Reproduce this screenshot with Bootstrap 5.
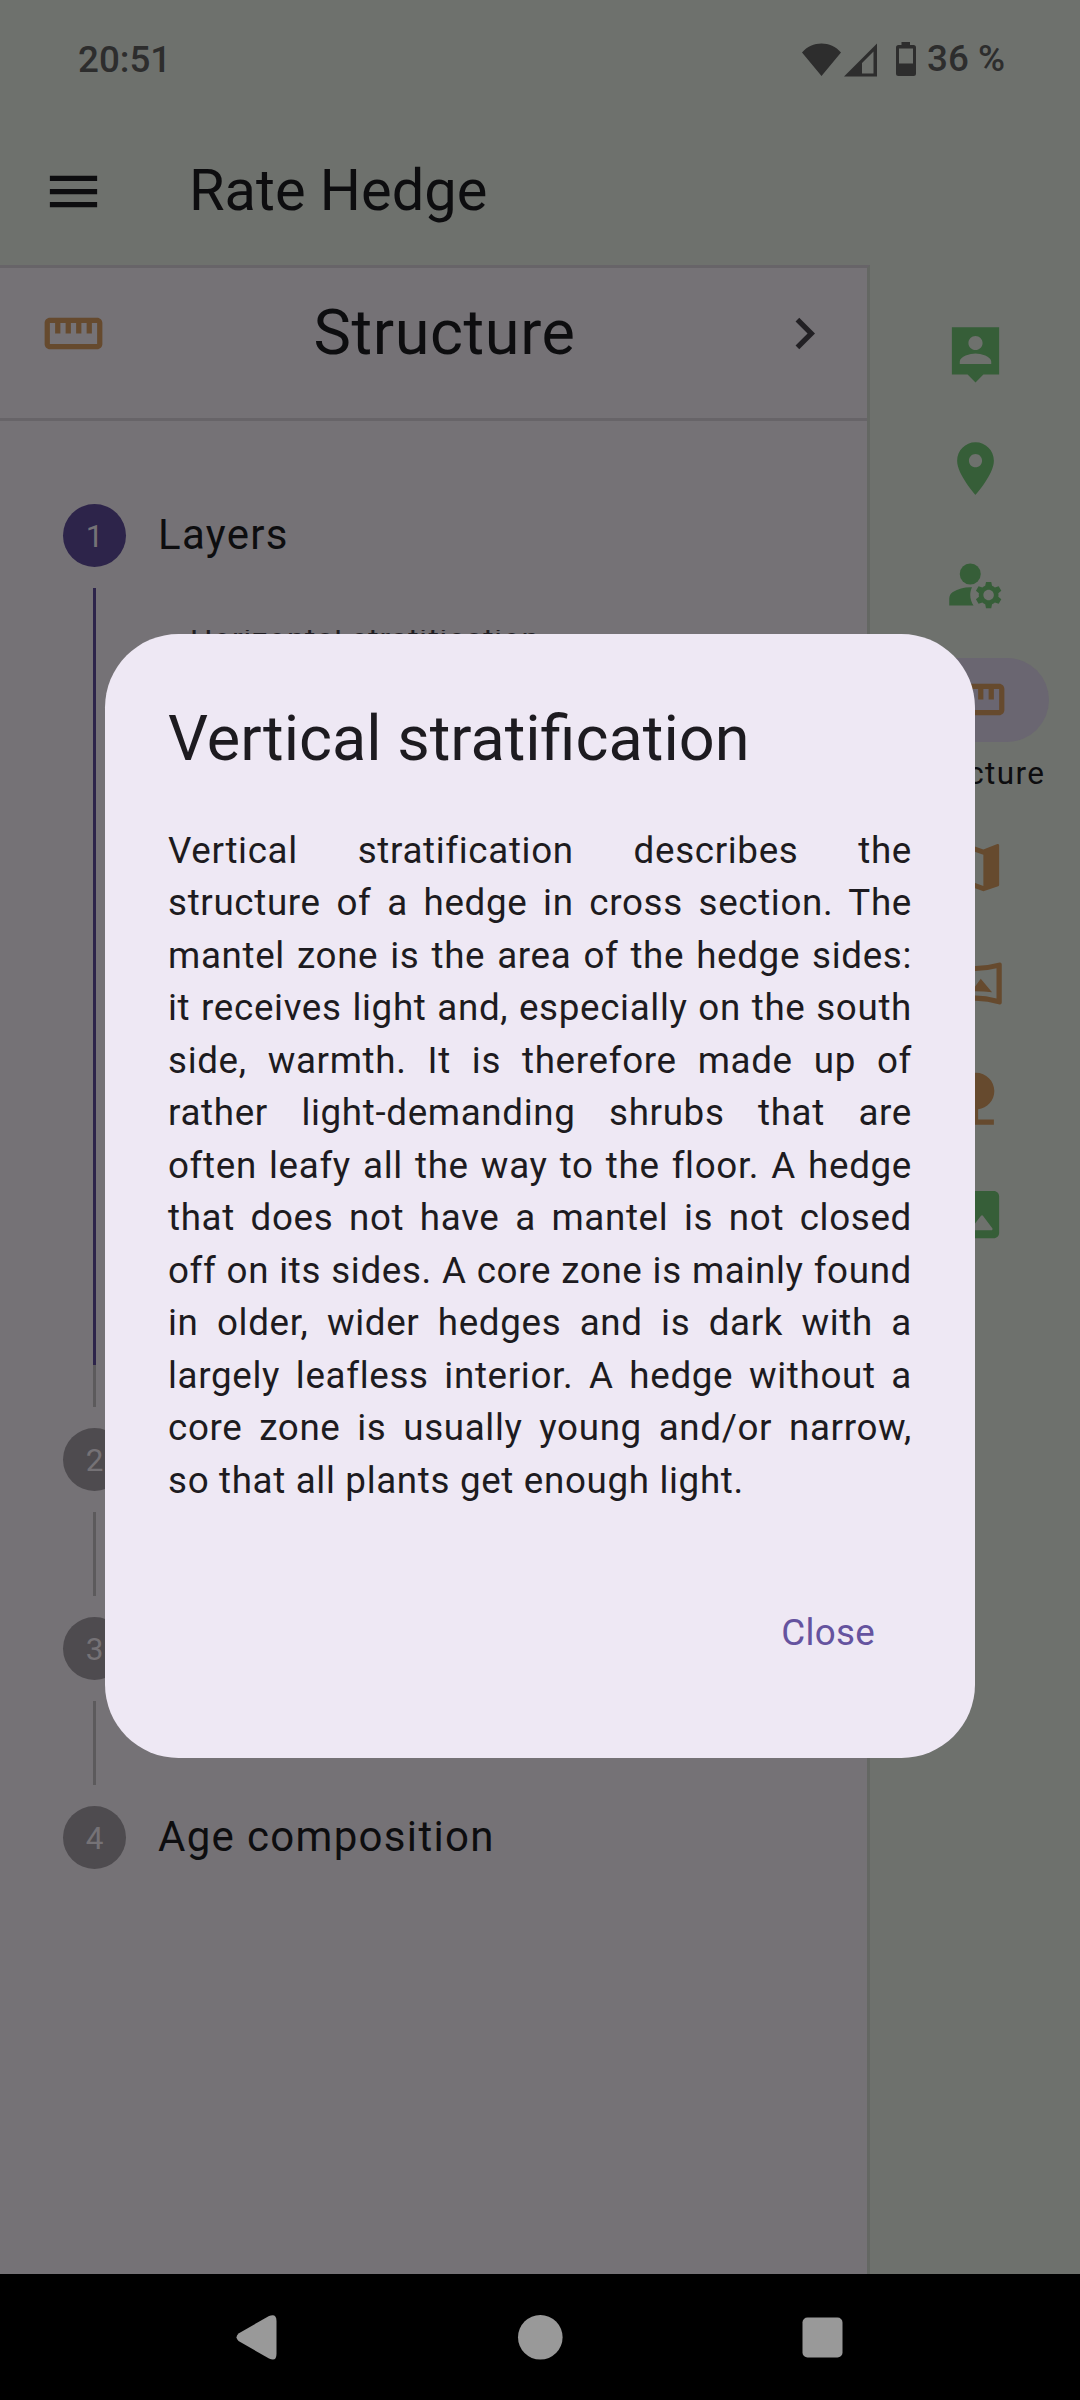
<!DOCTYPE html>
<html lang="en">
<head>
<meta charset="utf-8">
<meta name="viewport" content="width=device-width, initial-scale=1">
<title>Rate Hedge</title>
<link href="https://cdn.jsdelivr.net/npm/bootstrap@5.3.0/dist/css/bootstrap.min.css" rel="stylesheet">
<style>
:root{--shell:#6e716d;--panel:#757276;--rule:#676468;--ink:#0d0d0f;--leaf:#365e38;--bark:#664a2e;--violet:#2d244a}
body{font-family:Roboto,"Noto Sans",sans-serif;background:var(--shell);color:var(--ink);width:1080px;height:2400px;overflow:hidden;line-height:1}
svg{display:block;flex:none;fill:currentColor}
.ico{width:63px;height:63px}
.statusbar{height:118px;padding:0 75px 0 78px;color:#2d2d2d;font-size:36.75px;font-weight:500}
.clock{padding-top:2px}
.charge{margin-left:11px}
.appbar{height:147px;padding-left:42px;font-size:57.75px}
.apptitle{margin-left:84px;padding-bottom:2px}
.work{width:870px;border-top:3px solid var(--rule);border-right:3px solid #646763;background:var(--panel)}
.pagehead{height:153px;padding:0 31px 19px 42px;border-bottom:3px solid var(--rule);font-size:63px}
.pagetitle{letter-spacing:.62px;padding:0 0 2px 11px}
.steps{padding:83px 0 0 63px}
.bullet{width:63px;height:63px;background:#4e4b4f;color:#757276;font-size:31.5px;padding-top:2px}
.bullet.on{background:var(--violet)}
.steplabel{font-size:42px;letter-spacing:1.32px;padding:0 0 2px 32px}
.stem{width:3px;margin:21px 0 21px 30px;background:#5c5a5c;height:84px}
.stem.long{height:819px;background:linear-gradient(var(--violet) 777px,#5c5a5c 777px)}
.stepbody{margin:63px 0 0 94px;overflow:hidden;font-size:31.5px;letter-spacing:.8px;color:#222024}
.scrolled{margin-top:-6.5px;line-height:32px}
.rail{padding-top:57px;color:var(--leaf);width:210px}
.railitem{height:63px;margin-bottom:52.4px}
.earth{color:var(--bark)}
.pill{width:147px;height:84px;border-radius:42px;background:#6a6671}
.raillabel{font-size:31.5px;letter-spacing:1.4px;color:var(--ink)}
.sel{margin-top:-10.5px;height:178.8px}
.navkeys{height:126px;background:#000;color:#999}
.hedge-dialog{position:absolute;inset:634.2px 105px 642.3px 105px;background:#eee8f4;border-radius:73.5px;color:#1d1b20;padding:63px}
.dlgtitle{font-size:63px;line-height:84px;margin:0;font-weight:400}
.dlgtext{font-size:36.75px;line-height:52.5px;letter-spacing:.66px;text-align:justify;margin:43.5px 0 0}
.dlgclose{font-size:36.75px;letter-spacing:.3px;color:#65539f;padding:0;line-height:52px;border:0;margin:100px 37px 0 0}
</style>
</head>
<body class="d-flex flex-column position-relative">
<div class="statusbar d-flex align-items-center justify-content-between">
  <span class="clock">20:51</span>
  <span class="d-flex align-items-center">
    <svg width="114" height="36" viewBox="0 0 114 36"><path d="M0 11.500C10-.5 29-.5 39 11.500L19.500 35zM42 35.500L75 2.500V35.500zM60 22V32.500H71.500V10.500z" fill-rule="evenodd"/><path fill-rule="evenodd" d="M99.500 1h8.500v3h3.500q2.500 0 2.500 2.500v26q0 2.500-2.500 2.500h-15q-2.500 0-2.500-2.500V6.500Q94 4 96.500 4h3zM97 7.500v15h14v-15z"/></svg>
    <span class="charge">36 %</span>
  </span>
</div>
<header class="appbar d-flex align-items-center">
  <svg class="ico" viewBox="0 0 24 24"><path d="M3 18h18v-2H3v2zm0-5h18v-2H3v2zm0-7v2h18V6H3z"/></svg>
  <span class="apptitle">Rate Hedge</span>
</header>
<div class="d-flex flex-grow-1">
  <main class="work">
    <div class="pagehead d-flex align-items-center justify-content-between">
      <svg class="ico earth" viewBox="0 0 24 24"><path d="M21 6H3c-1.100 0-2 .9-2 2v8c0 1.100.9 2 2 2h18c1.100 0 2-.9 2-2V8c0-1.100-.9-2-2-2zm0 10H3V8h2v4h2V8h2v4h2V8h2v4h2V8h2v4h2V8h2v8z"/></svg>
      <span class="pagetitle">Structure</span>
      <svg class="ico" viewBox="0 0 24 24" color="#222024"><path d="M10 6L8.590 7.410 13.170 12l-4.580 4.590L10 18l6-6z"/></svg>
    </div>
    <div class="steps">
      <div class="d-flex align-items-center"><span class="bullet on rounded-circle d-flex align-items-center justify-content-center">1</span><span class="steplabel">Layers</span></div>
      <div class="d-flex"><div class="stem long"></div><div class="stepbody"><div class="scrolled">Horizontal stratification</div></div></div>
      <div class="d-flex align-items-center"><span class="bullet rounded-circle d-flex align-items-center justify-content-center">2</span></div>
      <div class="stem"></div>
      <div class="d-flex align-items-center"><span class="bullet rounded-circle d-flex align-items-center justify-content-center">3</span></div>
      <div class="stem"></div>
      <div class="d-flex align-items-center"><span class="bullet rounded-circle d-flex align-items-center justify-content-center">4</span><span class="steplabel">Age composition</span></div>
    </div>
  </main>
  <nav class="rail d-flex flex-column align-items-center">
    <div class="railitem"><svg class="ico" viewBox="0 0 24 24"><path fill-rule="evenodd" d="M21 2H3v18h6l3 3 3-3h6V2zM12 5.300c1.490 0 2.700 1.210 2.700 2.700s-1.210 2.700-2.700 2.700S9.300 9.490 9.300 8s1.210-2.700 2.700-2.700zM18 16H6v-.9c0-2 4-3.100 6-3.100s6 1.100 6 3.100v.9z"/></svg></div>
    <div class="railitem"><svg class="ico" viewBox="0 0 24 24"><path d="M12 2C8.130 2 5 5.130 5 9c0 5.250 7 13 7 13s7-7.750 7-13c0-3.870-3.130-7-7-7zm0 9.500c-1.380 0-2.500-1.120-2.500-2.500s1.120-2.500 2.500-2.500 2.500 1.120 2.500 2.500-1.120 2.500-2.500 2.500z"/></svg></div>
    <div class="railitem"><svg class="ico" viewBox="0 0 24 24"><circle cx="10" cy="8" r="4"/><path d="M10.670 13.020C10.450 13.010 10.230 13 10 13c-2.420 0-4.680.67-6.610 1.820C2.510 15.340 2 16.320 2 17.350V20h9.260C10.470 18.870 10 17.490 10 16c0-1.070.25-2.070.67-2.980z"/><path d="M20.750 16c0-.22-.03-.42-.06-.63l1.140-1.010-1-1.730-1.450.49c-.32-.27-.68-.48-1.080-.63L18 11h-2l-.3 1.490c-.4.15-.76.36-1.080.63l-1.450-.49-1 1.730 1.140 1.010c-.03.21-.06.41-.06.63s.03.42.06.63l-1.140 1.010 1 1.730 1.450-.49c.32.27.68.48 1.080.63L16 21h2l.3-1.490c.4-.15.76-.36 1.080-.63l1.450.49 1-1.730-1.140-1.010c.03-.21.06-.41.06-.63zM17 18c-1.100 0-2-.9-2-2s.9-2 2-2 2 .9 2 2-.9 2-2 2z"/></svg></div>
    <div class="sel d-flex flex-column align-items-center">
      <div class="pill d-flex align-items-center justify-content-center earth"><svg class="ico" viewBox="0 0 24 24"><path d="M21 6H3c-1.100 0-2 .9-2 2v8c0 1.100.9 2 2 2h18c1.100 0 2-.9 2-2V8c0-1.100-.9-2-2-2zm0 10H3V8h2v4h2V8h2v4h2V8h2v4h2V8h2v4h2V8h2v8z"/></svg></div>
      <div class="raillabel mt-3">Structure</div>
    </div>
    <div class="railitem earth"><svg class="ico" viewBox="0 0 24 24"><path d="M20.500 3l-.16.03L15 5.100 9 3 3.360 4.900c-.21.07-.36.25-.36.48V20.500c0 .28.22.5.5.5l.16-.03L9 18.900l6 2.100 5.640-1.900c.21-.07.36-.25.36-.48V3.500c0-.28-.22-.5-.5-.5zM15 19l-6-2.110V5l6 2.110V19z"/></svg></div>
    <div class="railitem earth"><svg class="ico" viewBox="0 0 24 24"><path fill-rule="evenodd" d="M21.200 4Q12 6.600 2.800 4Q2 3.900 2 4.800V19.200Q2 20.100 2.800 20Q12 17.200 21.200 20Q22 20.100 22 19.200V4.800Q22 3.900 21.200 4zM20 6.200V17.700Q12 15.500 4 17.700V6.200Q12 8.300 20 6.200z"/><path d="M14 10.200L18.300 15.300Q12 14.600 5.700 15.300L9 11.200L11.300 13.900z"/></svg></div>
    <div class="railitem earth"><svg class="ico" viewBox="0 0 24 24"><path d="M13 16.120c3.470-.41 6.170-3.360 6.170-6.950 0-3.870-3.130-7-7-7s-7 3.130-7 7c0 3.470 2.520 6.340 5.830 6.890V20H5v2h14v-2h-6v-3.880z"/></svg></div>
    <div class="railitem"><svg class="ico" viewBox="0 0 24 24"><path fill-rule="evenodd" d="M21 19V5c0-1.100-.9-2-2-2H5c-1.100 0-2 .9-2 2v14c0 1.100.9 2 2 2h14c1.100 0 2-.9 2-2zM8.900 13.980l2.100 2.530 3.100-3.990c.2-.26.6-.26.8.01l3.510 4.680c.25.33.01.8-.4.8H6.020c-.42 0-.65-.48-.39-.81L8.120 14c.19-.26.57-.27.78-.02z"/></svg></div>
  </nav>
</div>
<footer class="navkeys d-flex align-items-center">
  <svg width="1080" height="126" viewBox="0 0 1080 126"><path d="M238.500 59.500L269 42Q276.500 39 276.500 47V80Q276.500 88 269 84.500L238.500 67Q234.500 63.300 238.500 59.500z"/><circle cx="540.300" cy="63.300" r="22.300"/><rect x="802.500" y="43.500" width="40" height="40" rx="5"/></svg>
</footer>
<div class="hedge-dialog d-flex flex-column" role="dialog" aria-label="Vertical stratification">
  <h1 class="dlgtitle">Vertical stratification</h1>
  <p class="dlgtext">Vertical stratification describes the structure of a hedge in cross section. The mantel zone is the area of the hedge sides: it receives light and, especially on the south side, warmth. It is therefore made up of rather light-demanding shrubs that are often leafy all the way to the floor. A hedge that does not have a mantel is not closed off on its sides. A core zone is mainly found in older, wider hedges and is dark with a largely leafless interior. A hedge without a core zone is usually young and/or narrow, so that all plants get enough light.</p>
  <button class="btn dlgclose align-self-end">Close</button>
</div>
<script src="https://cdn.jsdelivr.net/npm/bootstrap@5.3.0/dist/js/bootstrap.bundle.min.js"></script>
</body>
</html>
